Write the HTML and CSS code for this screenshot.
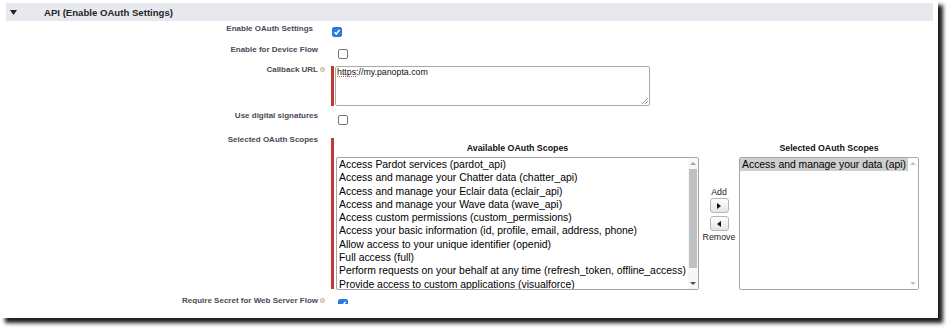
FILE: index.html
```html
<!DOCTYPE html>
<html lang="en">
<head>
  <meta charset="UTF-8" />
  <title>API (Enable OAuth Settings)</title>
  <link rel="stylesheet" href="styles.css">
</head>
<body>

  <div class="frame">
    <div class="page">

      <!-- Section header -->
      <div class="section-head">
        <svg class="toggle" width="7" height="5" viewBox="0 0 7 5"><polygon points="0,0 7,0 3.5,5" fill="#222"/></svg>
        <h3>API (Enable OAuth Settings)</h3>
      </div>

      <div class="row row-oauth">
        <div class="label">Enable OAuth Settings</div>
        <div class="field">
          <span class="check checked first">
            <svg width="8" height="8" viewBox="0 0 8 8"><polyline points="1.5,4.2 3.3,6 6.6,1.8" fill="none" stroke="#fff" stroke-width="1.5"/></svg>
          </span>
        </div>
      </div>

      <div class="row row-device">
        <div class="label">Enable for Device Flow</div>
        <div class="field"><span class="check"></span></div>
      </div>

      <div class="row row-callback">
        <div class="label">Callback URL<span class="help"><svg width="5" height="5" viewBox="0 0 5 5"><circle cx="2.5" cy="2.5" r="2.5" fill="#d3c4ab"/><circle cx="2.5" cy="2.5" r="1.1" fill="#f3ede3"/></svg></span></div>
        <div class="field required">
          <div class="textarea">
            <span class="typo">https</span>://my.panopta.com
            <svg class="grip" width="6" height="6" viewBox="0 0 6 6"><line x1="0" y1="6" x2="6" y2="0" stroke="#999"/><line x1="3" y1="6" x2="6" y2="3" stroke="#999"/></svg>
          </div>
        </div>
      </div>

      <div class="row row-signatures">
        <div class="label">Use digital signatures</div>
        <div class="field"><span class="check"></span></div>
      </div>

      <div class="row row-scopes">
        <div class="label">Selected OAuth Scopes</div>
        <div class="field required duelist">

          <div class="scope-col available">
            <div class="scope-title">Available OAuth Scopes</div>
            <div class="listbox">
              <div class="options">
                <div>Access Pardot services (pardot_api)</div>
                <div>Access and manage your Chatter data (chatter_api)</div>
                <div>Access and manage your Eclair data (eclair_api)</div>
                <div>Access and manage your Wave data (wave_api)</div>
                <div>Access custom permissions (custom_permissions)</div>
                <div>Access your basic information (id, profile, email, address, phone)</div>
                <div>Allow access to your unique identifier (openid)</div>
                <div>Full access (full)</div>
                <div>Perform requests on your behalf at any time (refresh_token, offline_access)</div>
                <div>Provide access to custom applications (visualforce)</div>
              </div>
              <div class="scrollbar">
                <div class="sb-arrow"><span class="tri-up"></span></div>
                <div class="sb-thumb"></div>
                <div class="sb-space"></div>
                <div class="sb-arrow"><span class="tri-down"></span></div>
              </div>
            </div>
          </div>

          <div class="move-col">
            <div class="move-text">Add</div>
            <div class="move-btn add">
              <svg width="4" height="6" viewBox="0 0 4 6"><polygon points="0,0 4,3 0,6" fill="#111"/></svg>
            </div>
            <div class="move-btn remove">
              <svg width="4" height="6" viewBox="0 0 4 6"><polygon points="4,0 0,3 4,6" fill="#111"/></svg>
            </div>
            <div class="move-text">Remove</div>
          </div>

          <div class="scope-col chosen">
            <div class="scope-title">Selected OAuth Scopes</div>
            <div class="listbox">
              <div class="options">
                <div class="picked">Access and manage your data (api)</div>
              </div>
              <div class="scrollbar empty">
                <div class="sb-arrow"><span class="tri-up"></span></div>
                <div class="sb-space"></div>
                <div class="sb-arrow"><span class="tri-down"></span></div>
              </div>
            </div>
          </div>

        </div>
      </div>

      <div class="row row-secret">
        <div class="label">Require Secret for Web Server Flow<span class="help"><svg width="5" height="5" viewBox="0 0 5 5"><circle cx="2.5" cy="2.5" r="2.5" fill="#d3c4ab"/><circle cx="2.5" cy="2.5" r="1.1" fill="#f3ede3"/></svg></span></div>
        <div class="field">
          <span class="check checked">
            <svg width="8" height="8" viewBox="0 0 8 8"><polyline points="1.5,4.2 3.3,6 6.6,1.8" fill="none" stroke="#fff" stroke-width="1.5"/></svg>
          </span>
        </div>
      </div>

    </div>
  </div>

</body>
</html>
```

FILE: styles.css
```css
:root {
  --label-color: #4a4a56;
  --required: #c23934;
  --list-border: #a6a6a6;
  --check-blue: #2a7ae2;
}

* {
  margin: 0;
  padding: 0;
  box-sizing: border-box;
}

body {
  background: #fff;
  font-family: "Liberation Sans", Arial, sans-serif;
  color: #000;
  height: 329px;
}

/* Screenshot frame with drop shadow */
.frame {
  width: 938px;
  height: 318px;
  background: #fff;
  box-shadow: 5px 5px 4px #1e1e1e;
  padding: 3px 5px 0 6px;
}

.page {
  height: 301px;
  overflow: hidden;
}

/* Section header */
.section-head {
  height: 18px;
  background: #e8e9ee;
  display: flex;
  align-items: center;
}

.section-head .toggle {
  margin-left: 4px;
  flex-shrink: 0;
}

.section-head h3 {
  margin-left: 27px;
  font-size: 9.6px;
  font-weight: bold;
  color: #262626;
}

/* Form rows */
.row {
  display: flex;
  align-items: flex-start;
}

.label {
  width: 325px;
  flex-shrink: 0;
  padding-right: 13px;
  text-align: right;
  font-size: 8px;
  line-height: 10px;
  font-weight: bold;
  color: var(--label-color);
}

.help {
  display: inline-block;
  width: 5px;
  height: 5px;
  margin-left: 2px;
  margin-right: -7px;
  vertical-align: 0;
}

.help svg {
  display: block;
}

.field {
  display: flex;
  align-items: flex-start;
}

.required {
  border-left: 3px solid var(--required);
}

.row-oauth { height: 22px; }
.row-oauth .label { padding-top: 3px; padding-right: 18px; }
.row-oauth .field { margin-top: 6px; }

.row-device { height: 20px; }
.row-device .label { padding-top: 2px; }
.row-device .field { margin-top: 6px; }

.row-callback { height: 47px; }
.row-callback .label { padding-top: 2px; }
.row-callback .field { margin-top: 3px; padding-left: 1px; }

.row-signatures { height: 24px; }
.row-signatures .label { padding-top: 1px; }
.row-signatures .field { margin-top: 5px; }

.row-scopes { height: 159px; }
.row-scopes .label { padding-top: 1px; }
.row-scopes .field { margin-top: 4px; padding-left: 2px; height: 151px; }

.row-secret .label { padding-top: 3px; }
.row-secret .field { margin-top: 6px; }

/* Checkboxes */
.check {
  display: flex;
  align-items: center;
  justify-content: center;
  width: 10px;
  height: 10px;
  margin-left: 7px;
  border: 1px solid #767676;
  border-radius: 2px;
  background: #fff;
}

.check.checked {
  background: var(--check-blue);
  border-color: var(--check-blue);
}

.check.first {
  margin-left: 1px;
}

/* Callback textarea */
.textarea {
  position: relative;
  width: 315px;
  height: 40px;
  border: 1px solid #a9a9a9;
  border-radius: 2px;
  padding: 0 2px 0 1px;
  font-size: 8.8px;
  line-height: 11px;
  color: #111;
}

.typo {
  text-decoration: underline dotted #e05555;
  text-decoration-thickness: 1px;
  text-underline-offset: 1px;
}

.grip {
  position: absolute;
  right: 1px;
  bottom: 1px;
}

/* Dual list */
.duelist {
  align-items: flex-start;
}

.scope-col.available { width: 363px; }
.scope-col.chosen { width: 180px; }

.scope-title {
  height: 19px;
  padding-top: 5px;
  text-align: center;
  font-size: 8.8px;
  line-height: 10px;
  font-weight: bold;
  color: #111;
}

.listbox {
  display: flex;
  height: 133px;
  border: 1px solid var(--list-border);
  border-radius: 2px;
  background: #fff;
  overflow: hidden;
}

.options {
  flex: 1;
  font-size: 10.4px;
  line-height: 13.3px;
  white-space: nowrap;
  color: #000;
}

.available .options div {
  padding-left: 2px;
}

.picked {
  background: #cecece;
  padding-left: 2px;
}

.scrollbar {
  width: 10px;
  display: flex;
  flex-direction: column;
  background: #f7f7f7;
}

.scrollbar.empty {
  background: #fff;
}

.sb-arrow {
  height: 11px;
  display: flex;
  align-items: center;
  justify-content: center;
}

.tri-up,
.tri-down {
  width: 0;
  height: 0;
  border-left: 3px solid transparent;
  border-right: 3px solid transparent;
}

.tri-up { border-bottom: 3px solid #a3a3a3; }
.tri-down { border-top: 3px solid #505050; }

.empty .tri-up { border-bottom-color: #c4c4c4; }
.empty .tri-down { border-top-color: #c4c4c4; }

.sb-thumb {
  height: 99px;
  margin: 0 1px;
  background: #c1c1c1;
}

.sb-space {
  flex: 1;
}

/* Add / Remove buttons */
.move-col {
  width: 40px;
  padding-top: 49px;
  display: flex;
  flex-direction: column;
  align-items: center;
}

.move-text {
  font-size: 8.8px;
  line-height: 10px;
  color: #222;
}

.move-btn {
  width: 19px;
  height: 15px;
  margin-top: 1px;
  display: flex;
  align-items: center;
  justify-content: center;
  border: 1px solid #b5b5b5;
  border-radius: 3px;
  background: linear-gradient(#ffffff, #e4e4e4);
}

.move-btn.remove {
  margin-top: 3px;
}

.move-btn.remove + .move-text {
  margin-top: 1px;
}
```
